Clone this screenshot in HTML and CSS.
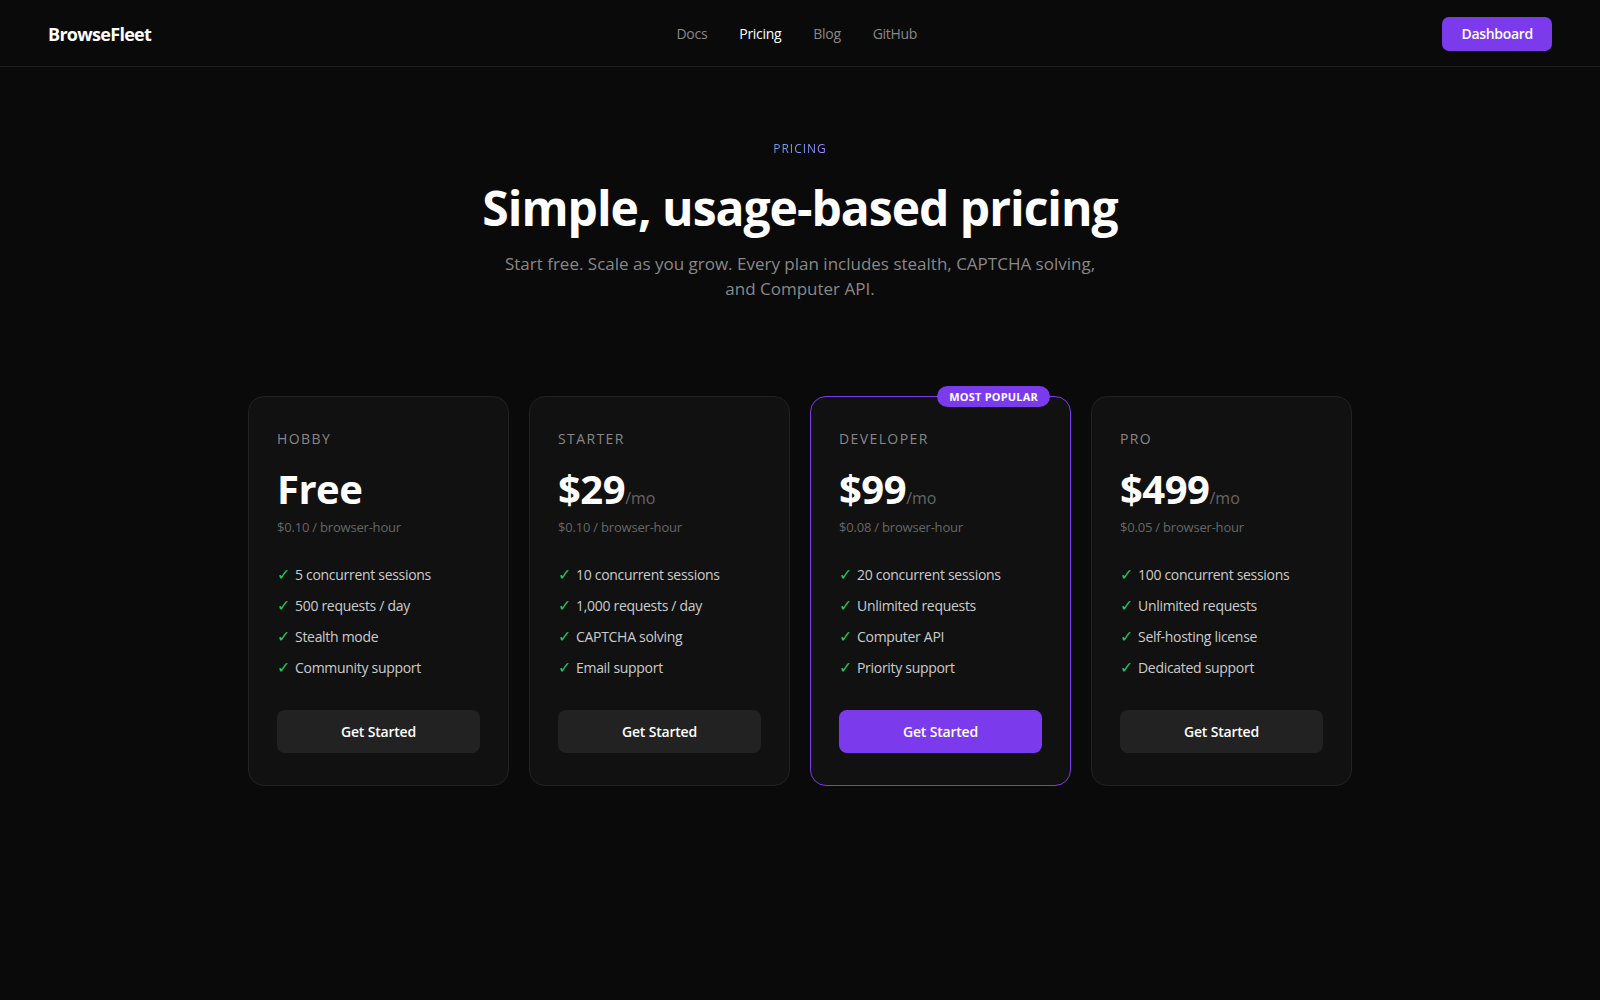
FILE: index.html
```html
<!DOCTYPE html>
<html lang="en">
<head>
    <meta charset="UTF-8">
    <meta name="viewport" content="width=device-width, initial-scale=1.0">
    <title>Pricing - BrowseFleet</title>
    <link rel="stylesheet" href="styles.css">
</head>
<body>
    <header class="topbar">
        <a class="logo" href="#">BrowseFleet</a>
        <nav class="nav">
            <a href="#">Docs</a>
            <a href="#" class="active">Pricing</a>
            <a href="#">Blog</a>
            <a href="#">GitHub</a>
        </nav>
        <a class="btn-dashboard" href="#">Dashboard</a>
    </header>

    <section class="hero">
        <div class="eyebrow">PRICING</div>
        <h1>Simple, usage-based pricing</h1>
        <p class="lead">Start free. Scale as you grow. Every plan includes stealth, CAPTCHA solving, and Computer API.</p>
    </section>

    <section class="plans">
        <div class="plan">
            <div class="plan-name">HOBBY</div>
            <div class="price">Free</div>
            <div class="rate">$0.10 / browser-hour</div>
            <ul class="features">
                <li>5 concurrent sessions</li>
                <li>500 requests / day</li>
                <li>Stealth mode</li>
                <li>Community support</li>
            </ul>
            <button class="btn-plan">Get Started</button>
        </div>

        <div class="plan">
            <div class="plan-name">STARTER</div>
            <div class="price">$29<span class="per">/mo</span></div>
            <div class="rate">$0.10 / browser-hour</div>
            <ul class="features">
                <li>10 concurrent sessions</li>
                <li>1,000 requests / day</li>
                <li>CAPTCHA solving</li>
                <li>Email support</li>
            </ul>
            <button class="btn-plan">Get Started</button>
        </div>

        <div class="plan featured">
            <span class="badge">MOST POPULAR</span>
            <div class="plan-name">DEVELOPER</div>
            <div class="price">$99<span class="per">/mo</span></div>
            <div class="rate">$0.08 / browser-hour</div>
            <ul class="features">
                <li>20 concurrent sessions</li>
                <li>Unlimited requests</li>
                <li>Computer API</li>
                <li>Priority support</li>
            </ul>
            <button class="btn-plan">Get Started</button>
        </div>

        <div class="plan">
            <div class="plan-name">PRO</div>
            <div class="price">$499<span class="per">/mo</span></div>
            <div class="rate">$0.05 / browser-hour</div>
            <ul class="features">
                <li>100 concurrent sessions</li>
                <li>Unlimited requests</li>
                <li>Self-hosting license</li>
                <li>Dedicated support</li>
            </ul>
            <button class="btn-plan">Get Started</button>
        </div>
    </section>
</body>
</html>
```

FILE: styles.css
```css
* {
    box-sizing: border-box;
}
body {
    font-family: "Open Sans", "Noto Sans", sans-serif;
    margin: 0;
    padding: 0;
    background-color: #0a0a0a;
    color: #fff;
    min-height: 100vh;
}
a {
    text-decoration: none;
}
.topbar {
    height: 67px;
    display: flex;
    align-items: center;
    justify-content: space-between;
    padding: 1px 48px 0;
    border-bottom: 1px solid #1c1c1c;
}
.logo {
    color: #fff;
    font-size: 18px;
    font-weight: 700;
    letter-spacing: -0.7px;
}
.nav {
    display: flex;
    gap: 32px;
}
.nav a {
    color: #888;
    font-size: 14px;
    letter-spacing: -0.3px;
}
.nav a.active {
    color: #fff;
}
.btn-dashboard {
    background-color: #7c3aed;
    color: #fff;
    font-size: 14px;
    font-weight: 600;
    letter-spacing: -0.3px;
    padding: 7px 19px;
    border-radius: 7px;
    line-height: 20px;
}
.hero {
    text-align: center;
    padding-top: 69px;
}
.eyebrow {
    display: inline-block;
    font-size: 12px;
    letter-spacing: 1px;
    line-height: 16px;
    font-weight: 500;
    background: linear-gradient(90deg, #60a5fa, #a78bfa);
    -webkit-background-clip: text;
    background-clip: text;
    color: transparent;
}
.hero h1 {
    font-size: 48px;
    font-weight: 700;
    line-height: 58px;
    margin: 21px 0 14px;
    letter-spacing: -1px;
}
.lead {
    max-width: 600px;
    margin: 0 auto;
    font-size: 17px;
    line-height: 25px;
    color: #888;
}
.plans {
    width: 1104px;
    margin: 95px auto 0;
    display: grid;
    grid-template-columns: repeat(4, 1fr);
    gap: 20px;
}
.plan {
    position: relative;
    background-color: #111;
    border: 1px solid #222;
    border-radius: 16px;
    padding: 32px 28px;
}
.plan.featured {
    border-color: #7c3aed;
}
.badge {
    position: absolute;
    top: -11px;
    right: 20px;
    background-color: #7c3aed;
    color: #fff;
    font-size: 11px;
    font-weight: 700;
    letter-spacing: 0.2px;
    line-height: 21px;
    padding: 0 12px;
    border-radius: 999px;
}
.plan-name {
    font-size: 14px;
    line-height: 20px;
    letter-spacing: 1.4px;
    color: #888;
}
.price {
    margin-top: 16px;
    font-size: 40px;
    font-weight: 700;
    line-height: 48px;
    height: 48px;
    letter-spacing: -0.5px;
}
.per {
    font-size: 16px;
    font-weight: 400;
    line-height: 1;
    color: #666;
    letter-spacing: 0;
}
.rate {
    margin-top: 5px;
    font-size: 13px;
    line-height: 18px;
    color: #666;
    letter-spacing: -0.2px;
}
.features {
    list-style: none;
    padding: 0;
    margin: 28px 0 32px;
    display: flex;
    flex-direction: column;
    gap: 10px;
}
.features li {
    font-size: 14px;
    line-height: 21px;
    color: #ccc;
    letter-spacing: -0.3px;
}
.features li::before {
    content: "\2713";
    display: inline-block;
    width: 18px;
    font-size: 16px;
    line-height: 1;
    color: #22c55e;
}
.btn-plan {
    display: block;
    width: 100%;
    height: 43px;
    border: none;
    border-radius: 8px;
    background-color: #222;
    color: #fff;
    font-family: inherit;
    font-size: 14px;
    font-weight: 600;
    letter-spacing: -0.2px;
    cursor: pointer;
}
.featured .btn-plan {
    background-color: #7c3aed;
}
```
